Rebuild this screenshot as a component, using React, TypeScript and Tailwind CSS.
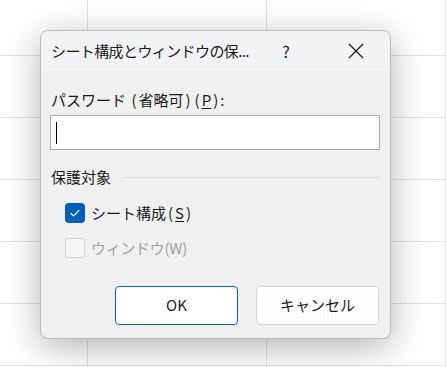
function P({ c }: { c: string }) {
  return <span className="mx-[2px]">{c}</span>;
}

export default function App() {
  return (
    <div
      className="w-[446px] h-[367px] overflow-hidden bg-white pt-[30px] pl-[40px] bg-[linear-gradient(to_right,#e1e1e1_1px,transparent_1px),linear-gradient(to_bottom,#e1e1e1_1px,transparent_1px)] bg-[size:179px_62px] bg-[position:87px_55px]"
      style={{ fontFamily: '"Noto Sans CJK JP", "Noto Sans", sans-serif' }}
    >
      <div className="w-[351px] h-[309px] rounded-[8px] border border-[#b9b9b9] bg-[#f0f0f0] shadow-[0_8px_36px_rgba(0,0,0,0.3)] flex flex-col text-[#1b1b1b]">
        {/* title bar */}
        <div className="h-[40px] flex items-center pl-[10px] rounded-t-[8px] bg-[#f2f3f5]">
          <span className="text-[15px] leading-[20px] tracking-[-0.6px] whitespace-nowrap">
            シート構成とウィンドウの保...
          </span>
          <div className="ml-auto flex items-center">
            <span className="w-[46px] text-center text-[16px] leading-[20px] mr-[2px]">?</span>
            <div className="w-[46px] ml-[22px] mr-[11px] flex justify-center">
              <svg width="16" height="16" viewBox="0 0 16 16">
                <path d="M1 1 L15 15 M15 1 L1 15" stroke="#1b1b1b" strokeWidth="1.3" fill="none" />
              </svg>
            </div>
          </div>
        </div>

        {/* password */}
        <div className="mt-[19px] pl-[10px] text-[15px] leading-[20px]">
          パスワード <P c="(" />省略可<P c=")" />
          <P c="(" />
          <span className="underline underline-offset-2">P</span>
          <P c=")" />:
        </div>
        <div className="mt-[5px] ml-[9px] w-[330px] h-[35px] bg-white border border-[#a9a9a9] flex items-center pl-[5px]">
          <div className="w-[1px] h-[22px] bg-black" />
        </div>

        {/* group */}
        <div className="mt-[17px] pl-[10px] flex items-center">
          <span className="text-[15px] leading-[20px]">保護対象</span>
          <div className="flex-1 ml-[11px] mr-[10px] h-[1px] bg-[#dadada]" />
        </div>

        <div className="mt-[16px] pl-[24px] flex items-center gap-[6px]">
          <div className="w-[20px] h-[20px] rounded-[4px] bg-[#005fb8] flex items-center justify-center">
            <svg width="12" height="12" viewBox="0 0 12 12">
              <path d="M1.8 6.3 L4.6 9 L10.2 3.2" stroke="white" strokeWidth="1.2" fill="none" />
            </svg>
          </div>
          <span className="text-[15px] leading-[20px]">
            シート構成<P c="(" />
            <span className="underline underline-offset-2">S</span>
            <P c=")" />
          </span>
        </div>

        <div className="mt-[15px] pl-[24px] flex items-center gap-[6px]">
          <div className="w-[20px] h-[20px] rounded-[4px] bg-[#f6f6f6] border border-[#d2d2d2]" />
          <span className="text-[15px] leading-[20px] tracking-[-0.3px] text-[#9f9f9f]">
            ウィンドウ(W)
          </span>
        </div>

        {/* buttons */}
        <div className="mt-[28px] pl-[74px] flex gap-[18px]">
          <button className="w-[123px] h-[39px] rounded-[4px] bg-white border border-[#0067c0] text-[15px] text-[#1b1b1b]">
            OK
          </button>
          <button className="w-[123px] h-[39px] rounded-[4px] bg-[#fdfdfd] border border-[#d6d6d6] text-[15px] text-[#1b1b1b]">
            キャンセル
          </button>
        </div>
      </div>
    </div>
  );
}
